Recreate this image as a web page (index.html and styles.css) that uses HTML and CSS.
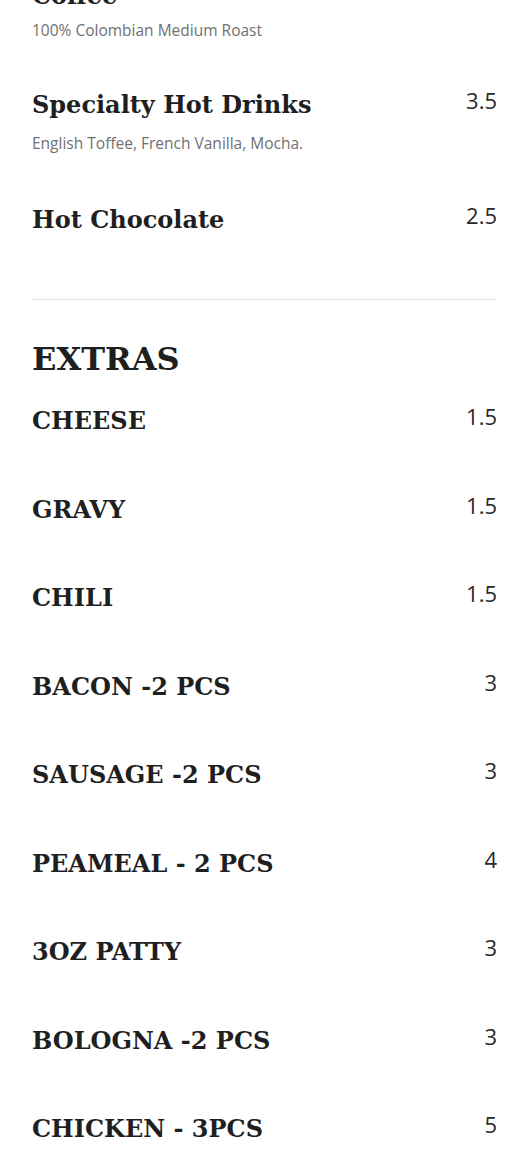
FILE: index.html
```html
<!DOCTYPE html>
<html>
<head>
<meta charset="utf-8">
<link rel="stylesheet" href="styles.css">
</head>
<body>
<main class="menu">
  <section class="section">
    <div class="item item--lead">
      <div class="row"><h3 class="name">Coffee</h3><span class="price">2</span></div>
      <p class="desc">100% Colombian Medium Roast</p>
    </div>
    <div class="item">
      <div class="row"><h3 class="name">Specialty Hot Drinks</h3><span class="price">3.5</span></div>
      <p class="desc">English Toffee, French Vanilla, Mocha.</p>
    </div>
    <div class="item item--plain">
      <div class="row"><h3 class="name">Hot Chocolate</h3><span class="price">2.5</span></div>
    </div>
  </section>
  <hr class="divider">
  <section class="section">
    <h2 class="section-title">EXTRAS</h2>
    <div class="item item--plain"><div class="row"><h3 class="name">CHEESE</h3><span class="price">1.5</span></div></div>
    <div class="item item--plain"><div class="row"><h3 class="name">GRAVY</h3><span class="price">1.5</span></div></div>
    <div class="item item--plain"><div class="row"><h3 class="name">CHILI</h3><span class="price">1.5</span></div></div>
    <div class="item item--plain"><div class="row"><h3 class="name">BACON -2 PCS</h3><span class="price">3</span></div></div>
    <div class="item item--plain"><div class="row"><h3 class="name">SAUSAGE -2 PCS</h3><span class="price">3</span></div></div>
    <div class="item item--plain"><div class="row"><h3 class="name">PEAMEAL - 2 PCS</h3><span class="price">4</span></div></div>
    <div class="item item--plain"><div class="row"><h3 class="name">3OZ PATTY</h3><span class="price">3</span></div></div>
    <div class="item item--plain"><div class="row"><h3 class="name">BOLOGNA -2 PCS</h3><span class="price">3</span></div></div>
    <div class="item item--plain"><div class="row"><h3 class="name">CHICKEN - 3PCS</h3><span class="price">5</span></div></div>
  </section>
</main>
</body>
</html>
```

FILE: styles.css
```css
html, body {
  margin: 0;
  padding: 0;
  background: #fff;
}
.menu {
  margin-top: -19px;
  padding: 0 33px 0 32px;
}
.section {
  display: flex;
  flex-direction: column;
}
.item {
  margin-bottom: 52px;
}
.item--lead {
  margin-bottom: 50px;
}
.item--lead .desc {
  margin-top: 9px;
}
.item--plain {
  margin-bottom: 58.5px;
}
.row {
  display: flex;
  justify-content: space-between;
  align-items: flex-start;
}
.name {
  margin: 0;
  font-family: "DejaVu Serif", serif;
  font-weight: bold;
  font-size: 24px;
  line-height: 30px;
  color: #1f1f1f;
}
.price {
  font-family: "Open Sans", sans-serif;
  font-size: 22px;
  line-height: 21px;
  color: #2a2a2a;
}
.desc {
  margin: 13px 0 0;
  font-family: "Open Sans", sans-serif;
  font-size: 15.5px;
  line-height: 20px;
  color: #707070;
}
.divider {
  margin: 5.5px 0 37px;
  border: 0;
  border-top: 1px solid #e2e2e2;
  height: 0;
}
.section-title {
  margin: 0 0 25px;
  font-family: "DejaVu Serif", serif;
  font-weight: bold;
  font-size: 32px;
  line-height: 44px;
  color: #1f1f1f;
}
```
